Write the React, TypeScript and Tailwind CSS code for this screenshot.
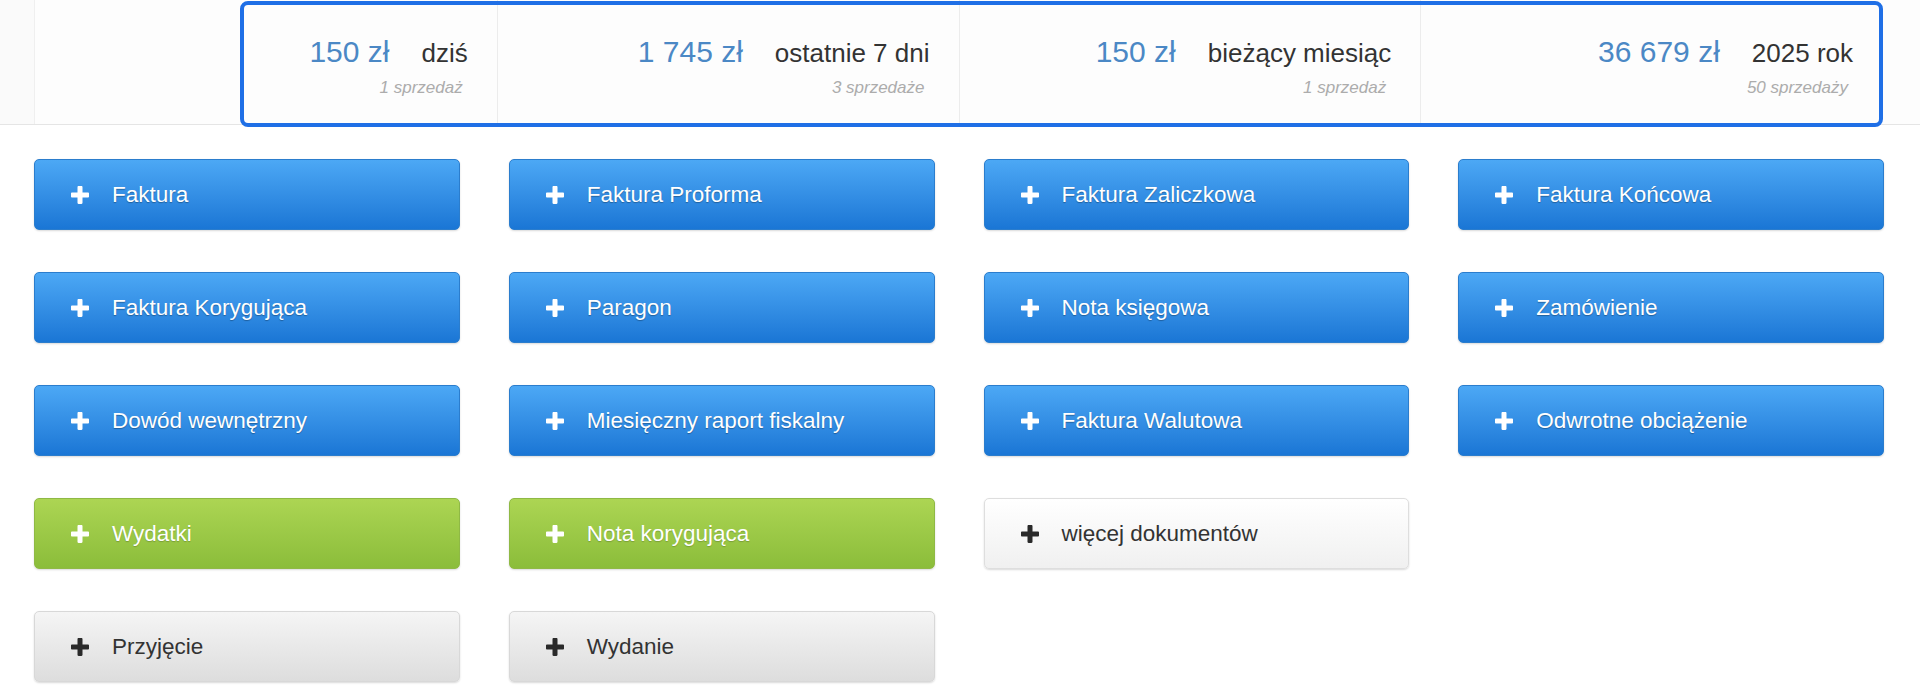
import React from "react";

type Stat = {
  amount: string;
  label: string;
  sales: string;
};

type Variant = "blue" | "green" | "gray" | "light";

type DocButton = {
  label: string;
  variant: Variant;
};

const stats: Stat[] = [
  { amount: "150 zł", label: "dziś", sales: "1 sprzedaż" },
  { amount: "1 745 zł", label: "ostatnie 7 dni", sales: "3 sprzedaże" },
  { amount: "150 zł", label: "bieżący miesiąc", sales: "1 sprzedaż" },
  { amount: "36 679 zł", label: "2025 rok", sales: "50 sprzedaży" },
];

// null = puste miejsce w siatce
const buttons: (DocButton | null)[] = [
  { label: "Faktura", variant: "blue" },
  { label: "Faktura Proforma", variant: "blue" },
  { label: "Faktura Zaliczkowa", variant: "blue" },
  { label: "Faktura Końcowa", variant: "blue" },
  { label: "Faktura Korygująca", variant: "blue" },
  { label: "Paragon", variant: "blue" },
  { label: "Nota księgowa", variant: "blue" },
  { label: "Zamówienie", variant: "blue" },
  { label: "Dowód wewnętrzny", variant: "blue" },
  { label: "Miesięczny raport fiskalny", variant: "blue" },
  { label: "Faktura Walutowa", variant: "blue" },
  { label: "Odwrotne obciążenie", variant: "blue" },
  { label: "Wydatki", variant: "green" },
  { label: "Nota korygująca", variant: "green" },
  { label: "więcej dokumentów", variant: "light" },
  null,
  { label: "Przyjęcie", variant: "gray" },
  { label: "Wydanie", variant: "gray" },
];

const variantClass: Record<Variant, string> = {
  blue: "bg-linear-to-b from-[#4ca8f5] to-[#1a76d5] border-[#2b7dcd] text-white [text-shadow:0_1px_1px_rgba(0,0,0,0.3)]",
  green:
    "bg-linear-to-b from-[#acd553] to-[#8bbd3a] border-[#8fb945] text-white [text-shadow:0_1px_1px_rgba(0,0,0,0.2)]",
  gray: "bg-linear-to-b from-[#f5f5f5] to-[#dddddd] border-[#d8d8d8] text-[#333]",
  light: "bg-linear-to-b from-white to-[#f0f0f0] border-[#dedede] text-[#333]",
};

function PlusIcon({ dark }: { dark: boolean }) {
  return (
    <svg
      viewBox="0 0 18 18"
      className={dark ? "h-[18px] w-[18px] fill-[#2a2a2a]" : "h-[18px] w-[18px] fill-white"}
    >
      <path d="M6.5 1.2c0-.7.4-1.2 1-1.2h3c.6 0 1 .5 1 1.2v5.3h5.3c.7 0 1.2.4 1.2 1v3c0 .6-.5 1-1.2 1h-5.3v5.3c0 .7-.4 1.2-1 1.2h-3c-.6 0-1-.5-1-1.2v-5.3H1.2c-.7 0-1.2-.4-1.2-1v-3c0-.6.5-1 1.2-1h5.3z" />
    </svg>
  );
}

export default function App() {
  return (
    <div className="min-h-screen bg-white [font-family:'Liberation_Sans',Arial,sans-serif]">
      {/* pasek sprzedaży */}
      <div className="relative flex h-[125px] border-b border-[#e5e5e5] bg-[#fdfdfd] pr-[38px]">
        <div className="w-[35px] shrink-0 border-r border-[#efefef] bg-[#fafafa]" />
        <div className="grid flex-1 grid-cols-4">
          {stats.map((s, i) => (
            <div
              key={s.label}
              className={`pr-[29px] pt-[34px] text-right ${i > 0 ? "border-l border-[#ececec]" : ""}`}
            >
              <div className="flex items-baseline justify-end gap-[32px] leading-[36px]">
                <span className="text-[30px] text-[#4b88c5]">{s.amount}</span>
                <span className="text-[26px] text-[#333]">{s.label}</span>
              </div>
              <div className="mt-[7px] pr-[5px] text-[17px] italic leading-[20px] text-[#acacac]">
                {s.sales}
              </div>
            </div>
          ))}
        </div>
        {/* zaznaczenie */}
        <div className="pointer-events-none absolute -bottom-[3px] left-[240px] right-[37px] top-[1px] rounded-[8px] border-[4px] border-[#1f6fe6]" />
      </div>

      {/* przyciski dokumentów */}
      <div className="grid grid-cols-4 gap-x-[49px] gap-y-[42px] pl-[34px] pr-[36px] pt-[34px]">
        {buttons.map((b, i) =>
          b ? (
            <button
              key={b.label}
              className={`flex h-[71px] items-center gap-[23px] rounded-[5px] border pl-[36px] text-left text-[22.5px] shadow-[0_1px_2px_rgba(0,0,0,0.15)] ${variantClass[b.variant]}`}
            >
              <PlusIcon dark={b.variant === "gray" || b.variant === "light"} />
              <span>{b.label}</span>
            </button>
          ) : (
            <div key={`empty-${i}`} />
          )
        )}
      </div>
    </div>
  );
}
